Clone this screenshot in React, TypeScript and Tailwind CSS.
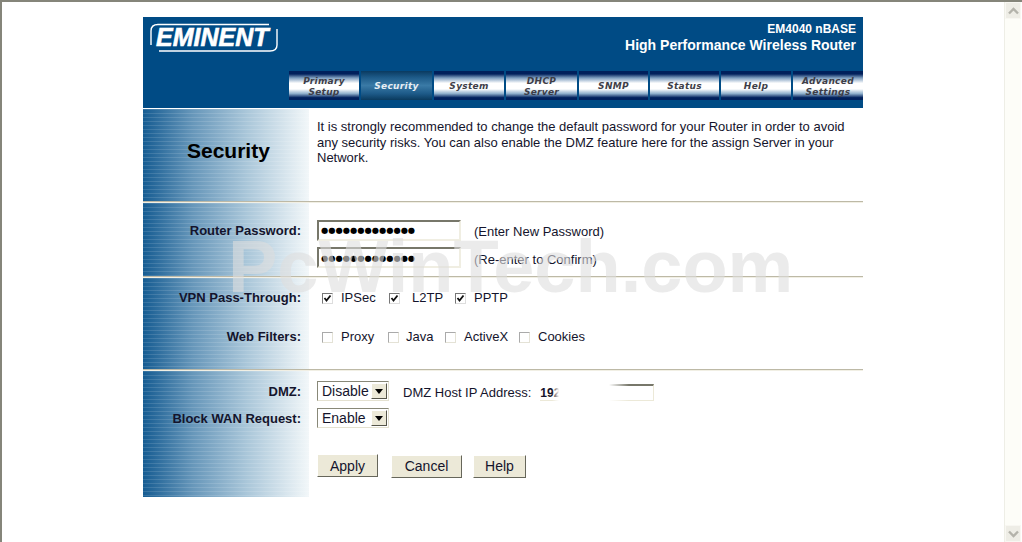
import type { ReactNode } from "react";

const navItems = [
  { lines: ["Primary", "Setup"], width: "w-[70px]" },
  { lines: ["Security"], width: "w-[71px]" },
  { lines: ["System"], width: "w-[70px]" },
  { lines: ["DHCP", "Server"], width: "w-[71px]" },
  { lines: ["SNMP"], width: "w-[69px]" },
  { lines: ["Status"], width: "w-[69px]" },
  { lines: ["Help"], width: "w-[70px]" },
  { lines: ["Advanced", "Settings"], width: "w-[70px]" },
];

const sideBg =
  "bg-[repeating-linear-gradient(to_bottom,rgba(255,255,255,0.12)_0px,rgba(255,255,255,0.12)_1px,rgba(255,255,255,0)_1px,rgba(255,255,255,0)_4px),linear-gradient(to_right,#165c92_0%,#6797ba_30%,#a9c6d9_62%,#f2f7f9_100%)]";

function Logo() {
  return (
    <div className="relative w-[128px] h-[30px]">
      <svg width="128" height="30" viewBox="0 0 128 30" className="absolute left-0 top-0">
        <path d="M1 22 V8 Q1 1.5 8 1.5 H119" fill="none" stroke="#fff" strokeWidth="1.4" />
        <path d="M127 6 V22 Q127 28 120 28 H9" fill="none" stroke="#fff" strokeWidth="1.4" />
      </svg>
      <span className="absolute left-[6px] top-[-2px] font-['Liberation_Sans',sans-serif] font-bold italic text-[25px] leading-[32px] text-white [-webkit-text-stroke:0.6px_white]">
        EMINENT
      </span>
    </div>
  );
}

function NavButton({ lines, active, width }: { lines: string[]; active: boolean; width: string }) {
  return (
    <div
      className={`${width} h-[29px] pt-[2px] flex flex-col items-center justify-center font-['DejaVu_Sans',sans-serif] font-bold italic text-[9px] leading-[11px] tracking-[0.3px] ${
        active
          ? "text-[#e8eef4] bg-[linear-gradient(to_bottom,#0a3a60_0%,#1d5a88_22%,#3a7aa6_50%,#1d5a88_78%,#0a3a5e_100%)]"
          : "text-[#3e3e48] bg-[linear-gradient(to_bottom,#00205c_0%,#00205c_10%,#7f9fc0_24%,#ffffff_42%,#ffffff_62%,#8fb0cc_78%,#00205c_92%,#00205c_100%)]"
      }`}
    >
      {lines.map((line) => (
        <span key={line}>{line}</span>
      ))}
    </div>
  );
}

function Section({
  height,
  side,
  children,
}: {
  height: string;
  side: ReactNode;
  children: ReactNode;
}) {
  return (
    <div className={`flex ${height}`}>
      <div className={`w-[166px] shrink-0 ${sideBg}`}>{side}</div>
      <div className="flex-1 pl-[8px]">{children}</div>
    </div>
  );
}

function Divider() {
  return <div className="h-[2px] bg-[linear-gradient(to_bottom,#bdb9a6_50%,#f1efe4_50%)]" />;
}

function SideLabel({ children, className }: { children: ReactNode; className: string }) {
  return (
    <div className={`text-right pr-[8px] font-bold text-[13px] leading-[16px] text-[#14142c] ${className}`}>
      {children}
    </div>
  );
}

function Box({ checked }: { checked?: boolean }) {
  return (
    <span
      className={`w-[11px] h-[11px] shrink-0 flex items-center justify-center border bg-white ${
        checked
          ? "border-t-[#777] border-l-[#777] border-b-[#ddd] border-r-[#ddd]"
          : "border-t-[#aaa] border-l-[#aaa] border-b-[#e4e2d6] border-r-[#e4e2d6]"
      }`}
    >
      {checked && (
        <svg width="9" height="9" viewBox="0 0 9 9">
          <path d="M1.5 4 L3.5 6.5 L7.5 1.5" fill="none" stroke="#111" strokeWidth="1.8" />
        </svg>
      )}
    </span>
  );
}

function PasswordField() {
  return (
    <input
      type="text"
      readOnly
      defaultValue="●●●●●●●●●●●●●"
      className="w-[144px] h-[21px] pl-[2px] bg-white outline-none text-[8.3px] text-black font-['DejaVu_Sans',sans-serif] border-2 border-t-[#77776a] border-l-[#77776a] border-r-[#f0eee2] border-b-[#f0eee2]"
    />
  );
}

function SelectBox({ value }: { value: string }) {
  return (
    <div className="w-[72px] h-[20px] flex items-center justify-between bg-white border border-[#e4e1d0] border-t-[#888878] border-l-[#888878] pl-[4px] pr-[1px] text-[14px] leading-[16px]">
      <span>{value}</span>
      <span className="w-[16px] h-[16px] flex items-center justify-center bg-[#ece9d8] border border-t-white border-l-white border-b-[#55554a] border-r-[#55554a]">
        <svg width="8" height="5" viewBox="0 0 8 5">
          <path d="M0 0 H8 L4 5 Z" fill="#000" />
        </svg>
      </span>
    </div>
  );
}

function WinButton({ label, width }: { label: string; width: string }) {
  return (
    <button
      type="button"
      className={`${width} h-[23px] bg-[#ece9d8] border border-t-white border-l-white border-b-[#66665a] border-r-[#66665a] text-[14px] text-[#14142c] leading-none`}
    >
      {label}
    </button>
  );
}

function ScrollArrow({ d }: { d: string }) {
  return (
    <div className="h-[17px] bg-[#eeede6] border border-[#f8f7f2] flex items-center justify-center">
      <svg width="11" height="8" viewBox="0 0 11 8">
        <path d={d} fill="none" stroke="#b4b3ab" strokeWidth="2.4" />
      </svg>
    </div>
  );
}

export default function App() {
  return (
    <div className="relative w-[1022px] h-[542px] overflow-hidden flex bg-white border-t-2 border-l-2 border-t-[#85857a] border-l-[#85857a] font-['Liberation_Sans',Arial,sans-serif] text-[#14142c]">
      <div className="flex-1 pt-[15px]">
        <div className="w-[720px] ml-[141px]">
          <div className="h-[91px] bg-[#004b85] flex flex-col">
            <div className="h-[54px] flex justify-between pl-[7px] pr-[7px] pt-[6px]">
              <Logo />
              <div className="text-right text-white font-bold mt-[-1px]">
                <div className="text-[12px] leading-[14px]">EM4040 nBASE</div>
                <div className="text-[14px] leading-[16px] mt-[1px]">High Performance Wireless Router</div>
              </div>
            </div>
            <div className="flex gap-[2px] ml-[146px]">
              {navItems.map((item) => (
                <NavButton
                  key={item.lines[0]}
                  lines={item.lines}
                  width={item.width}
                  active={item.lines[0] === "Security"}
                />
              ))}
            </div>
          </div>

          <div className="h-[1px] bg-white" />
          <Section
            height="h-[92px]"
            side={
              <div className="pt-[29px] pl-[44px] font-bold text-[21px] leading-[26px] text-black">Security</div>
            }
          >
            <p className="pt-[10px] text-[13px] leading-[15.5px] w-[540px]">
              It is strongly recommended to change the default password for your Router in order to avoid any security risks. You can also enable the DMZ feature here for the assign Server in your Network.
            </p>
          </Section>
          <Divider />

          <Section
            height="h-[73px]"
            side={<SideLabel className="pt-[20px]">Router Password:</SideLabel>}
          >
            <div className="pt-[16px] flex flex-col gap-[5px]">
              <div className="flex items-center gap-[13px]">
                <PasswordField />
                <span className="text-[13px] pt-[3px]">(Enter New Password)</span>
              </div>
              <div className="flex items-center gap-[13px]">
                <PasswordField />
                <span className="text-[13px] pt-[3px]">(Re-enter to Confirm)</span>
              </div>
            </div>
          </Section>
          <Divider />

          <Section
            height="h-[91px]"
            side={
              <>
                <SideLabel className="pt-[12px]">VPN Pass-Through:</SideLabel>
                <SideLabel className="pt-[23px]">Web Filters:</SideLabel>
              </>
            }
          >
            <div className="pt-[12px] pl-[5px] text-[13px] leading-[16px]">
              <div className="flex items-center">
                <Box checked />
                <span className="ml-[8px] w-[48px]">IPSec</span>
                <Box checked />
                <span className="ml-[12px] w-[43px]">L2TP</span>
                <Box checked />
                <span className="ml-[8px]">PPTP</span>
              </div>
              <div className="flex items-center mt-[23px]">
                <Box />
                <span className="ml-[8px] w-[47px]">Proxy</span>
                <Box />
                <span className="ml-[7px] w-[39px]">Java</span>
                <Box />
                <span className="ml-[8px] w-[55px]">ActiveX</span>
                <Box />
                <span className="ml-[8px]">Cookies</span>
              </div>
            </div>
          </Section>
          <Divider />

          <Section
            height="h-[126px]"
            side={
              <>
                <SideLabel className="pt-[13px]">DMZ:</SideLabel>
                <SideLabel className="pt-[11px]">Block WAN Request:</SideLabel>
              </>
            }
          >
            <div className="pt-[10px]">
              <div className="flex items-center">
                <SelectBox value="Disable" />
                <span className="ml-[14px] text-[13px] leading-[16px] pt-[3px]">DMZ Host IP Address:</span>
                <div className="relative ml-[9px] mt-[2px] w-[114px] h-[17px] border-t-2 border-r border-b border-[#ece9d8] border-t-[#77776a] text-[12px] leading-[15px] font-bold">
                  192
                  <div className="absolute -left-[1px] -top-[2px] w-[90px] h-[17px] bg-[linear-gradient(to_right,rgba(255,255,255,0)_13px,#ffffff_20px,#ffffff_70px,rgba(255,255,255,0)_90px)]" />
                  <div className="absolute -left-[1px] -top-[2px] w-[24px] h-[2px] bg-white" />
                </div>
              </div>
              <div className="mt-[7px]">
                <SelectBox value="Enable" />
              </div>
              <div className="mt-[26px] flex">
                <WinButton label="Apply" width="w-[61px]" />
                <div className="ml-[13px]">
                  <WinButton label="Cancel" width="w-[71px]" />
                </div>
                <div className="ml-[11px]">
                  <WinButton label="Help" width="w-[53px]" />
                </div>
              </div>
            </div>
          </Section>
        </div>
      </div>

      <div className="w-[17px] shrink-0 mr-[1px] bg-[#fdfdf8] border-l border-[#eeeee6] flex flex-col justify-between">
        <ScrollArrow d="M1 6.5 L5.5 2 L10 6.5" />
        <ScrollArrow d="M1 1.5 L5.5 6 L10 1.5" />
      </div>

      <div className="absolute left-[226px] top-[228px] pointer-events-none font-bold text-[74px] leading-[74px] text-[#dedede]/60 whitespace-nowrap">
        PcWinTech.com
      </div>
    </div>
  );
}
